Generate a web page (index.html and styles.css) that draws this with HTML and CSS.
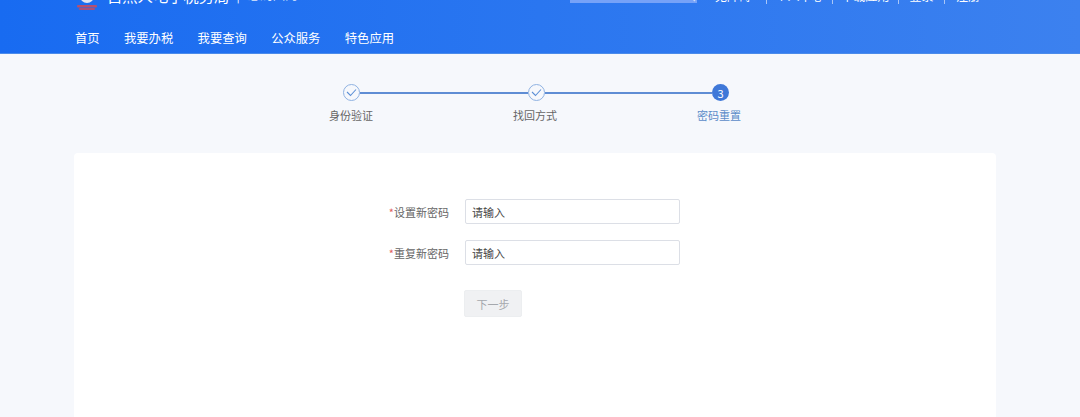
FILE: index.html
```html
<!DOCTYPE html>
<html lang="zh-CN">
<head>
  <meta charset="UTF-8" />
  <title>自然人电子税务局</title>
  <link rel="stylesheet" href="styles.css">
</head>
<body>
  <header class="site-header">
    <div class="top-row">
      <div class="brand">
        <svg class="logo" width="26" height="30" viewBox="0 0 26 30">
          <circle cx="13" cy="15" r="7" fill="#dfe5f1" />
          <circle cx="13" cy="15" r="3.5" fill="#7f93b8" />
          <rect x="3" y="24" width="20" height="2.5" rx="1" fill="#b4506f" />
          <rect x="5" y="27" width="16" height="2" rx="1" fill="#a8507a" />
        </svg>
        <span class="brand-name">自然人电子税务局</span>
        <span class="brand-sep">|</span>
        <span class="brand-sub">总局国的</span>
      </div>
      <div class="top-tools">
        <div class="search">
          <svg width="10" height="20" viewBox="0 0 10 20">
            <circle cx="3" cy="12" r="4" fill="none" stroke="#c9d9f7" stroke-width="1.4" />
            <path d="M6 15l3 3" stroke="#c9d9f7" stroke-width="1.4" />
          </svg>
        </div>
        <a class="top-link first">无障碍</a>
        <a class="top-link wide">个人中心</a>
        <a class="top-link wide">下载应用</a>
        <a class="top-link">登录</a>
        <a class="top-link">注册</a>
      </div>
    </div>
    <nav class="main-nav">
      <a>首页</a>
      <a>我要办税</a>
      <a>我要查询</a>
      <a>公众服务</a>
      <a>特色应用</a>
    </nav>
  </header>

  <main class="content">
    <section class="steps">
      <div class="step-track">
        <span class="step-dot done">
          <svg width="11" height="9" viewBox="0 0 11 9"><path d="M1 4l3.5 3.5L10 1.5" fill="none" stroke="#5c8fd6" stroke-width="1.1" /></svg>
        </span>
        <span class="step-line"></span>
        <span class="step-dot done">
          <svg width="11" height="9" viewBox="0 0 11 9"><path d="M1 4l3.5 3.5L10 1.5" fill="none" stroke="#5c8fd6" stroke-width="1.1" /></svg>
        </span>
        <span class="step-line"></span>
        <span class="step-dot active">3</span>
      </div>
      <div class="step-labels">
        <span>身份验证</span>
        <span>找回方式</span>
        <span class="current">密码重置</span>
      </div>
    </section>

    <section class="card">
      <form class="reset-form">
        <label for="newPwd"><em>*</em>设置新密码</label>
        <input id="newPwd" type="text" placeholder="请输入" />
        <label for="repeatPwd"><em>*</em>重复新密码</label>
        <input id="repeatPwd" type="text" placeholder="请输入" />
        <button type="button" class="btn" disabled>下一步</button>
      </form>
    </section>
  </main>
</body>
</html>
```

FILE: styles.css
```css
* {
  box-sizing: border-box;
}

html,
body {
  height: 100%;
}

body {
  margin: 0;
  overflow: hidden;
  font-family: "Noto Sans CJK SC", "Liberation Sans", sans-serif;
  background-color: #f6f8fc;
  color: #666;
}

.site-header {
  height: 54px;
  background: linear-gradient(90deg, #186bf1, #3c81ef);
  border-bottom: 1px solid #4b8bea;
  color: #fff;
}

.top-row {
  display: flex;
  align-items: flex-end;
  height: 5px;
  padding-left: 74px;
}

.brand {
  display: flex;
  align-items: flex-end;
  flex: 0 0 496px;
  height: 30px;
}

.logo {
  margin-bottom: -6px;
  margin-right: 7px;
}

.brand-name {
  font-size: 15.3px;
  line-height: 20px;
}

.brand-sep {
  margin: 0 8px 0 7px;
  font-size: 12px;
  line-height: 20px;
}

.brand-sub {
  font-size: 12.5px;
  line-height: 20px;
  opacity: 0.85;
}

.top-tools {
  display: flex;
  align-items: flex-end;
  height: 20px;
  margin-bottom: 1px;
  font-size: 12px;
  line-height: 20px;
}

.search {
  display: flex;
  justify-content: flex-end;
  width: 127px;
  height: 20px;
  margin-bottom: 1px;
  padding-right: 1px;
  overflow: hidden;
  background: #76a2f8;
}

.top-link {
  width: 64px;
  text-align: center;
  border-right: 1px solid #a9c6f7;
  line-height: 16px;
}

.top-link.first {
  width: 70px;
  padding-left: 18px;
  text-align: left;
}

.top-link.wide {
  width: 66px;
}

.top-link:nth-last-child(2) {
  width: 46px;
}

.top-link:last-child {
  width: 46px;
  border-right: 0;
}

.main-nav {
  display: flex;
  gap: 24.4px;
  margin-top: 23px;
  padding-left: 75px;
  font-size: 12.3px;
  line-height: 20px;
}

.content {
  padding: 0 84px 0 74px;
}

.steps {
  padding-top: 30px;
}

.step-track {
  display: flex;
  align-items: center;
  width: 386px;
  margin-left: 269px;
}

.step-dot {
  display: flex;
  align-items: center;
  justify-content: center;
  flex: none;
  width: 17px;
  height: 17px;
  border-radius: 50%;
  font-size: 11px;
}

.step-dot.done {
  border: 1px solid #8fb2e2;
}

.step-dot.active {
  background: #3f78d8;
  color: #fff;
}

.step-line {
  flex: 1;
  height: 2px;
  background: #5f8dd4;
}

.step-labels {
  display: grid;
  grid-template-columns: repeat(3, 184px);
  margin-left: 185px;
  padding-top: 6px;
  font-size: 11px;
  line-height: 16px;
  text-align: center;
}

.step-labels .current {
  color: #5b8cc9;
}

.card {
  height: 270px;
  margin-top: 30px;
  padding-top: 46px;
  background: #fff;
  border-radius: 4px;
}

.reset-form {
  display: grid;
  grid-template-columns: 375px 215px;
  column-gap: 16px;
  row-gap: 16px;
  align-items: center;
}

.reset-form label {
  font-size: 11px;
  text-align: right;
}

.reset-form em {
  color: #e0605c;
  font-style: normal;
}

.reset-form input {
  width: 100%;
  height: 25px;
  padding: 0 6px;
  font-family: inherit;
  font-size: 11px;
  background: #fff;
  border: 1px solid #dcdfe6;
  border-radius: 2px;
}

.reset-form input::placeholder {
  color: #444;
  opacity: 1;
}

.btn {
  grid-column: 2;
  width: 58px;
  height: 27px;
  margin: 9px 0 0 -1px;
  font-family: inherit;
  font-size: 11px;
  color: #a5a8ad;
  background: #f0f1f3;
  border: 1px solid #eceef0;
  border-radius: 2px;
}
```
